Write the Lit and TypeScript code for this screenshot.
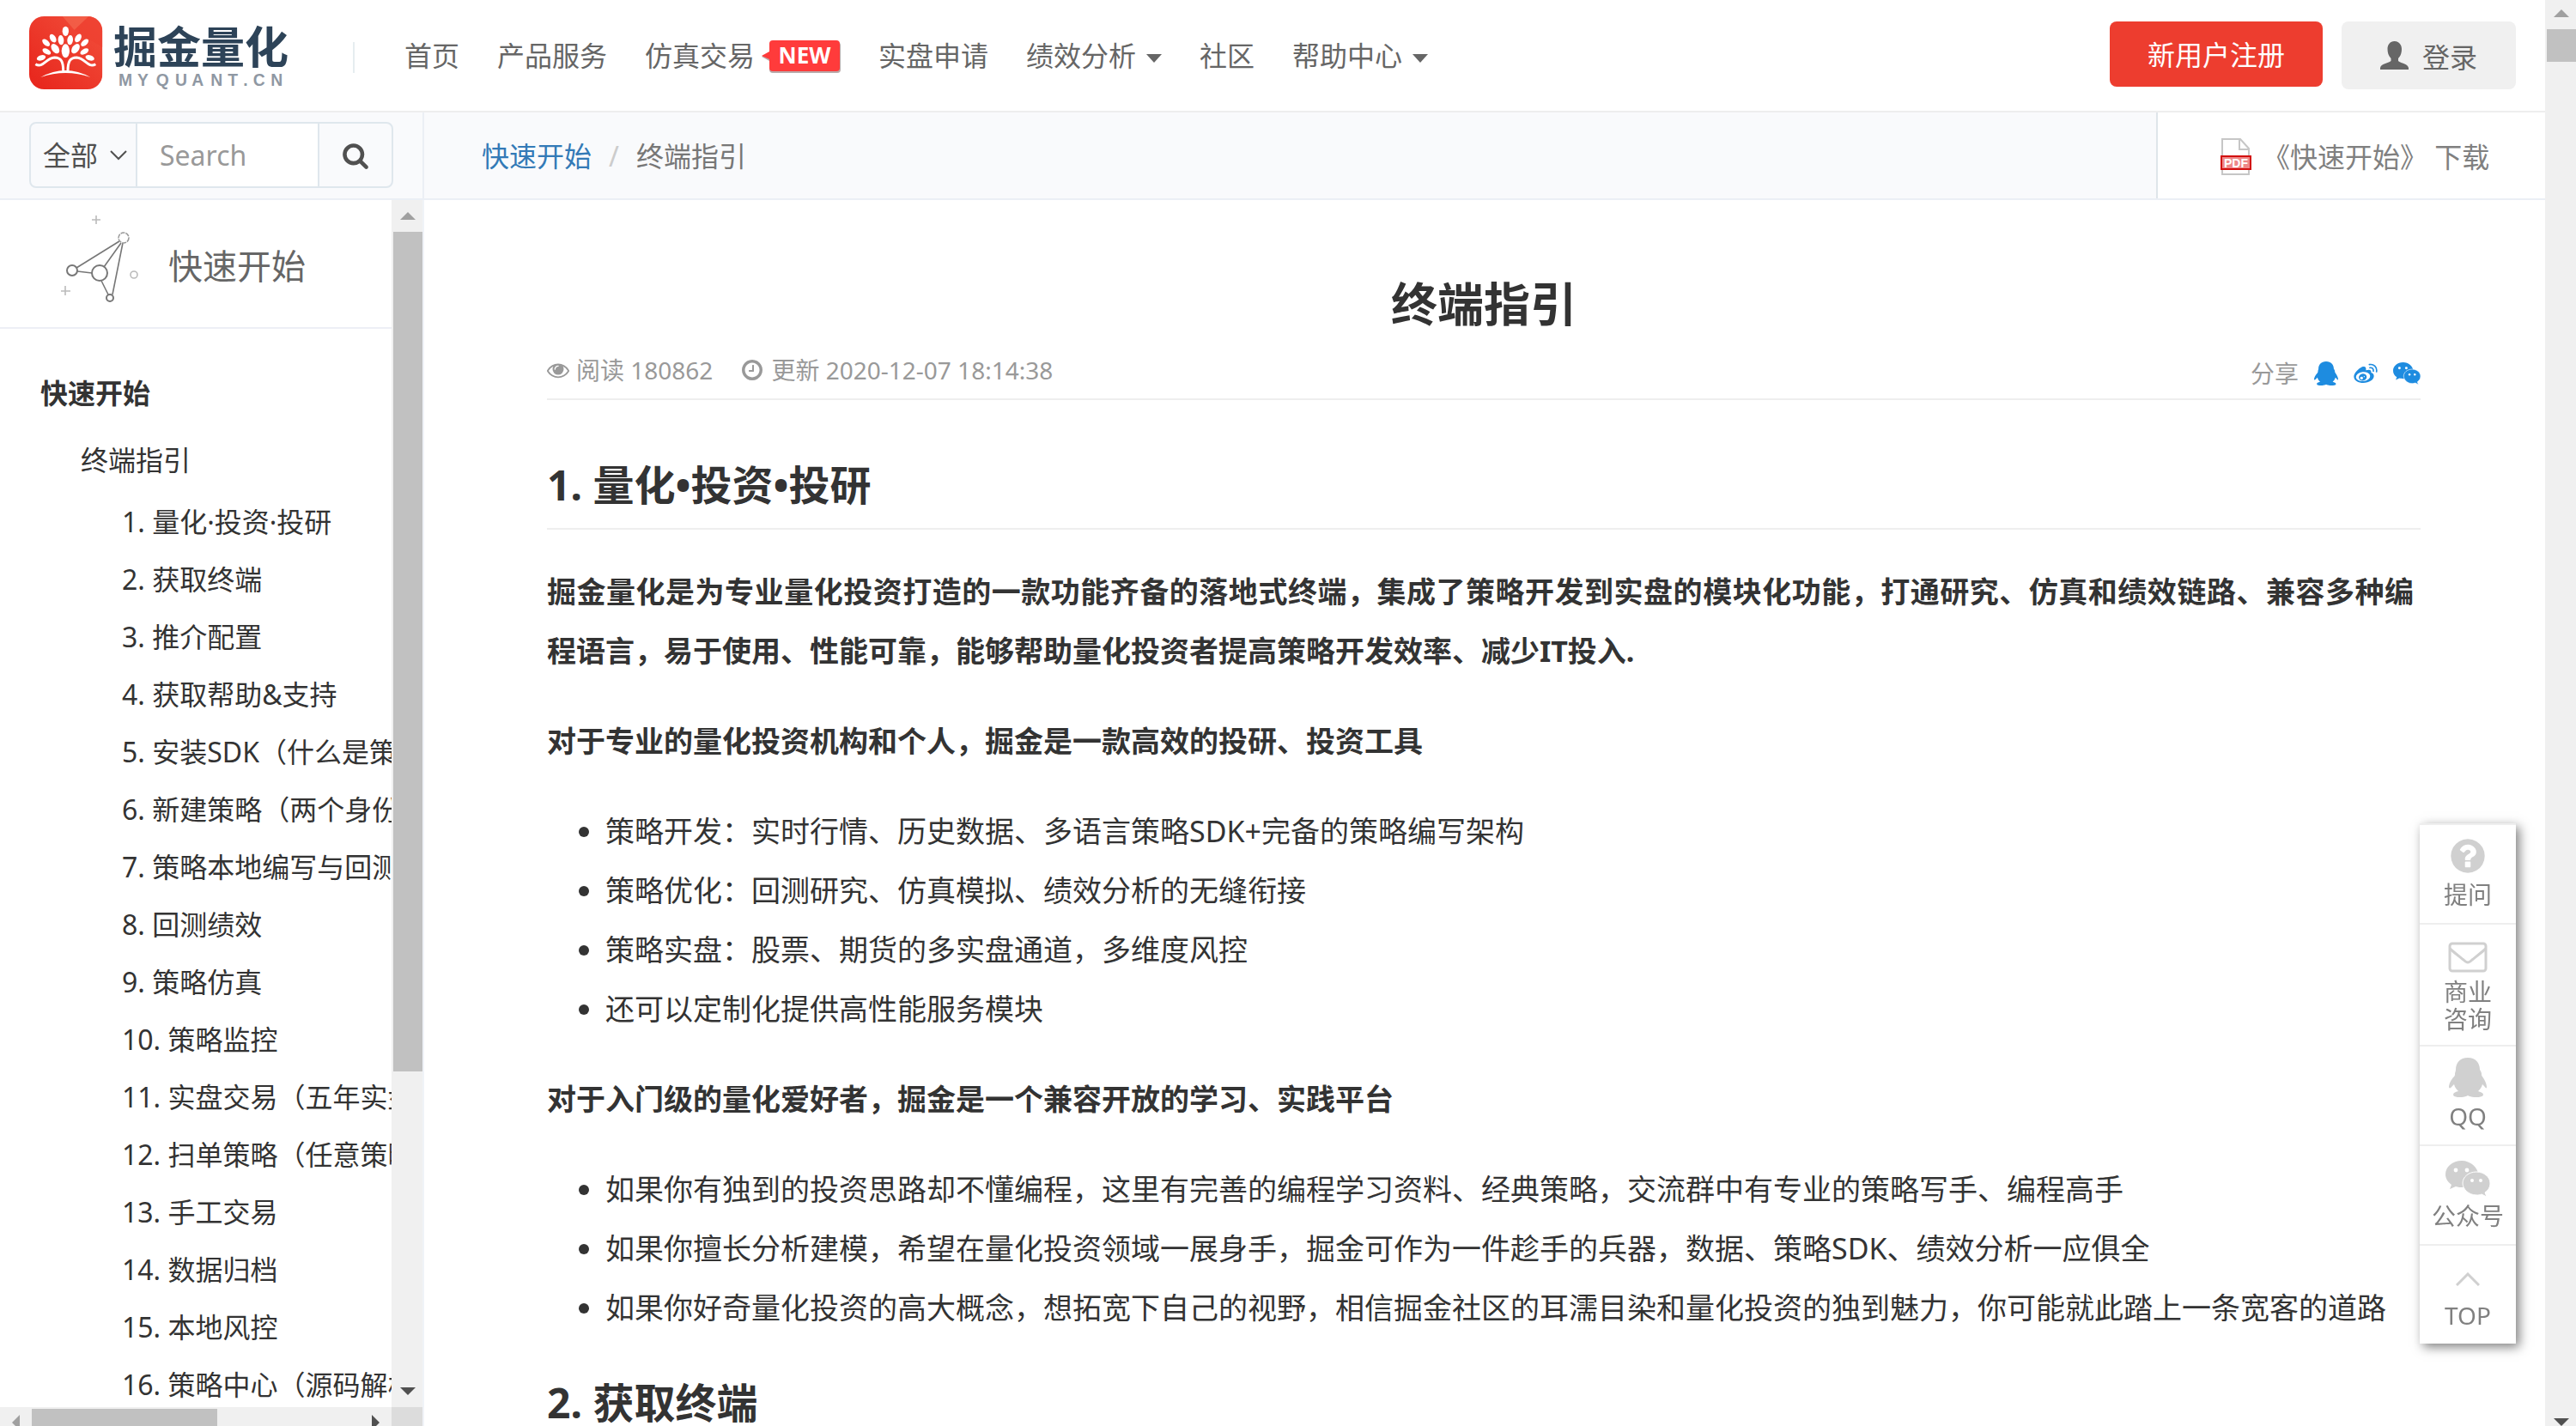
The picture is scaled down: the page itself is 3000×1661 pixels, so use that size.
import { LitElement, html, svg, css } from "lit";
import { customElement } from "lit/decorators.js";

const EYE =
  "M1664 960q-152-236-381-353 61 104 61 225 0 185-131.5 316.5t-316.5 131.5-316.5-131.5-131.5-316.5q0-121 61-225-229 117-381 353 133 205 333.5 326.5t434.5 121.5 434.5-121.5 333.5-326.5zm-720-384q0-20-14-34t-34-14q-125 0-214.5 89.5t-89.5 214.5q0 20 14 34t34 14 34-14 14-34q0-86 61-147t147-61q20 0 34-14t14-34zm848 384q0 34-20 69-140 230-376.5 368.5t-499.5 138.5-499.5-139-376.5-368q-20-35-20-69t20-69q140-229 376.5-368t499.5-139 499.5 139 376.5 368q20 35 20 69z";
const CLOCK =
  "M1024 544v448q0 14-9 23t-23 9h-320q-14 0-23-9t-9-23v-64q0-14 9-23t23-9h224v-352q0-14 9-23t23-9h64q14 0 23 9t9 23zm416 352q0-148-73-273t-198-198-273-73-273 73-198 198-73 273 73 273 198 198 273 73 273-73 198-198 73-273zm224 0q0 209-103 385.5t-279.5 279.5-385.5 103-385.5-103-279.5-279.5-103-385.5 103-385.5 279.5-279.5 385.5-103 385.5 103 279.5 279.5 103 385.5z";
const SEARCH =
  "M1216 832q0-185-131.5-316.5t-316.5-131.5-316.5 131.5-131.5 316.5 131.5 316.5 316.5 131.5 316.5-131.5 131.5-316.5zm512 832q0 52-38 90t-90 38q-54 0-90-38l-343-342q-179 124-399 124-143 0-273.5-55.5t-225-150-150-225-55.5-273.5 55.5-273.5 150-225 225-150 273.5-55.5 273.5 55.5 225 150 150 225 55.5 273.5q0 220-124 399l343 343q37 37 37 90z";
const QUESTION =
  "M1024 1376v-192q0-14-9-23t-23-9h-192q-14 0-23 9t-9 23v192q0 14 9 23t23 9h192q14 0 23-9t9-23zm256-672q0-88-55.5-163t-138.5-116-170-41q-243 0-371 213-15 24 8 42l132 100q7 6 19 6 16 0 25-12 53-68 86-92 34-24 86-24 48 0 85.5 26t37.5 59q0 38-20 61t-68 45q-63 28-115.5 86.5t-52.5 125.5v36q0 14 9 23t23 9h192q14 0 23-9t9-23q0-19 21.5-49.5t54.5-49.5q32-18 49-28.5t46-35 44.5-48 28-60.5 12.5-81zm384 192q0 209-103 385.5t-279.5 279.5-385.5 103-385.5-103-279.5-279.5-103-385.5 103-385.5 279.5-279.5 385.5-103 385.5 103 279.5 279.5 103 385.5z";

const fa = (d: string, size: number) => html`
  <svg width=${size} height=${size} viewBox="0 0 1792 1792" fill="currentColor" aria-hidden="true"><path d=${d} /></svg>
`;

const qq = (w: number, h: number) => html`
  <svg width=${w} height=${h} viewBox="0 0 44 46" fill="currentColor" preserveAspectRatio="none" aria-hidden="true">
    <path d="M22 0C13 0 8 6 8 14c0 2-1 3-1 5 0 1 0 2-1 3-4 4-6 9-6 12 0 2 2 2 4-1l2-2c1 4 3 6 5 8-4 1-6 2-6 4 0 4 12 4 17 1 5 3 18 3 18-1 0-2-3-3-6-4 2-2 4-4 5-8l2 2c2 3 3 3 3 1 0-3-2-8-5-12-1-1-1-2-1-3 0-2-1-3-2-5C36 6 31 0 22 0z" />
  </svg>
`;

const wechat = (w: number, h: number) => html`
  <svg width=${w} height=${h} viewBox="0 0 52 42" aria-hidden="true">
    <path fill="currentColor" d="M19 0C8 0 0 7 0 16c0 5 3 9 7 12l-2 5 7-3c3 1 5 1 8 1 10 0 18-7 18-15S29 0 19 0z" />
    <path fill="currentColor" stroke="#fff" stroke-width="1" d="M36 13c-9 0-16 6-16 13s7 14 16 14c2 0 4 0 6-1l6 3-2-5c4-3 6-6 6-11 0-7-7-13-16-13z" />
    <g fill="#fff"><circle cx="12" cy="11" r="2.4" /><circle cx="25" cy="11" r="2.4" /><circle cx="31" cy="23" r="2" /><circle cx="41" cy="23" r="2" /></g>
  </svg>
`;

const weibo = html`
  <svg width="28" height="24" viewBox="0 0 84 70" aria-hidden="true">
    <path fill="currentColor" d="M30 12C17 18 1 34 1 46c0 13 15 22 33 22 20 0 37-11 37-24 0-7-5-10-10-12 3-8-4-13-18-8 2-9-2-16-13-12z" />
    <ellipse cx="33" cy="46" rx="25" ry="16" fill="#fff" transform="rotate(-6 33 46)" />
    <ellipse cx="32" cy="48" rx="14" ry="12" fill="currentColor" transform="rotate(-15 32 48)" />
    <circle cx="28" cy="51" r="5" fill="#fff" /><circle cx="37" cy="46" r="2" fill="#fff" />
    <g fill="none" stroke="currentColor" stroke-width="5" stroke-linecap="round">
      <path d="M55 4c15-3 28 8 25 25" /><path d="M57 15c8-1 13 4 12 12" />
    </g>
  </svg>
`;

/* [cx, cy, rx, ry, rotation] of every leaf of the logo's tree */
const LEAVES = [
  [229, 109, 11, 17, 0],
  [185, 134, 10, 16, -30],
  [213, 140, 10, 17, -6],
  [245, 140, 10, 17, 6],
  [273, 133, 10, 16, 30],
  [161, 149, 9, 16, -48],
  [296, 149, 9, 16, 48],
  [163, 180, 9, 16, -60],
  [193, 170, 12, 19, -35],
  [229, 178, 14, 24, 0],
  [264, 170, 12, 19, 35],
  [295, 180, 9, 16, 60],
  [144, 202, 9, 16, 72],
  [314, 202, 9, 16, -72],
];

const logo = html`
  <svg class="logo" width="308" height="85" viewBox="102 57 924 255" role="img" aria-label="掘金量化 MYQUANT.CN">
    <defs>
      <linearGradient id="red" x1="0" y1="1" x2="1" y2="0">
        <stop offset="0" stop-color="#e7241b" /><stop offset="1" stop-color="#f2503c" />
      </linearGradient>
      <clipPath id="tile"><rect x="102" y="57" width="256" height="255" rx="52" /></clipPath>
    </defs>
    <g clip-path="url(#tile)">
      <rect x="102" y="57" width="256" height="255" fill="url(#red)" />
      <path d="M218 57l42 48 50-48z" fill="#f4664f" opacity=".7" />
      <path d="M260 105l98 60V57h-48z" fill="#ee4030" opacity=".7" />
    </g>
    <g fill="#fff">
      ${LEAVES.map(([x, y, rx, ry, r]) => svg`<ellipse cx=${x} cy=${y} rx=${rx} ry=${ry} transform="rotate(${r} ${x} ${y})" />`)}
      <path d="M142 270Q229 222 316 270Q229 240 142 270z" />
    </g>
    <g fill="none" stroke="#fff" stroke-width="9">
      <path d="M124 224C150 240 160 203 190 201C214 201 221 216 221 248" />
      <path d="M334 224C308 240 298 203 268 201C244 201 237 216 237 248" />
    </g>
    <text class="brand" x="396" y="221">掘金量化</text>
    <text class="domain" x="414 480 545 612 670 736 796 850 884 946" y="299">MYQUANT.CN</text>
  </svg>
`;

const TOC = [
  "1. 量化·投资·投研",
  "2. 获取终端",
  "3. 推介配置",
  "4. 获取帮助&支持",
  "5. 安装SDK（什么是策",
  "6. 新建策略（两个身份",
  "7. 策略本地编写与回测",
  "8. 回测绩效",
  "9. 策略仿真",
  "10. 策略监控",
  "11. 实盘交易（五年实盘",
  "12. 扫单策略（任意策略",
  "13. 手工交易",
  "14. 数据归档",
  "15. 本地风控",
  "16. 策略中心（源码解析",
];

const caret = html`<svg class="caret" width="18" height="10" viewBox="0 0 18 10" aria-hidden="true"><path d="M0 0h18l-9 10z" fill="currentColor" /></svg>`;
const arrow = (d: string, color: string, w = 18, h = 9) =>
  html`<svg width=${w} height=${h} viewBox="0 0 ${w} ${h}"><path d=${d} fill=${color} /></svg>`;

@customElement("app-root")
export class AppRoot extends LitElement {
  static styles = css`
    * { box-sizing: border-box; }
    :host {
      display: block;
      height: 100vh;
      overflow: hidden;
      background: #fff;
      color: #333;
      font: 32px/44px "Noto Sans", "Noto Sans CJK SC", sans-serif;
    }
    svg { display: block; flex: none; }
    a { color: inherit; text-decoration: none; }
    ul { list-style: none; margin: 0; padding: 0; }
    button, input, select { font: inherit; color: inherit; margin: 0; border: 0; background: none; }
    .app { display: flex; height: 100%; }
    .page { flex: 1; min-width: 0; display: flex; flex-direction: column; }

    .header { display: flex; height: 131px; padding: 0 34px; border-bottom: 2px solid #eee; color: #666; }
    .logo { margin-top: 19px; overflow: visible; }
    .brand { font: 700 153px "Noto Sans CJK SC", sans-serif; fill: #2d4358; }
    .domain { font: 700 58px "Liberation Sans", sans-serif; fill: #8f98a3; }
    .divider { width: 2px; height: 36px; margin: 49px 0 0 69px; background: #e6edf0; }
    .menu { display: flex; align-items: center; gap: 44px; height: 129px; margin-left: 58px; }
    .menu a { display: flex; align-items: center; }
    .caret { margin-left: 12px; margin-top: 6px; }
    .new { margin-left: 8px; margin-top: 4px; }
    .new text { font: 700 26px "Open Sans", sans-serif; fill: #fff; }
    .account { display: flex; align-items: flex-start; gap: 22px; margin-left: auto; padding-top: 25px; }
    .register { width: 248px; height: 76px; padding: 2px 0 0; border-radius: 8px; background: #ed3d2f; color: #fff; }
    .login { display: flex; align-items: center; justify-content: center; gap: 16px; width: 203px; height: 79px; padding: 0; border-radius: 8px; background: #f0f0f0; }
    .login span { padding-top: 4px; }

    .subbar { display: flex; height: 102px; background: #f9fafc; border-bottom: 2px solid #ebeff5; }
    .finder { width: 494px; padding: 11px 34px; border-right: 2px solid #ebeff5; }
    .search { display: flex; height: 77px; border: 2px solid #dfe7ed; border-radius: 8px; overflow: hidden; color: #505050; }
    .scope { display: flex; align-items: center; width: 124px; border-right: 2px solid #dfe7ed; }
    .scope select { appearance: none; width: 92px; height: 73px; padding: 0 0 0 14px; outline: 0; }
    .query { width: 210px; padding: 0 26px; background: #fff; outline: 0; }
    .query::placeholder { color: #999; opacity: 1; }
    .go { flex: 1; display: flex; align-items: center; justify-content: center; padding: 0; border-left: 2px solid #dfe7ed; }
    .crumbs { flex: 1; display: flex; align-items: center; gap: 20px; padding: 2px 0 0 67px; color: #777; }
    .crumbs a { color: #337ab7; }
    .slash { color: #ccc; }
    .download { display: flex; align-items: center; gap: 12px; width: 453px; padding: 4px 0 0 72px; background: #fff; border-left: 2px solid #dfe5ea; color: #808080; }

    .body { flex: 1; min-height: 0; display: flex; }
    .sidebar { width: 494px; display: flex; flex-direction: column; border-right: 2px solid #f0f3f8; }
    .pane { flex: 1; min-height: 0; display: flex; }
    .toc { flex: 1; min-width: 0; overflow: hidden; white-space: nowrap; line-height: 67px; }
    .book { display: flex; align-items: flex-start; gap: 32px; height: 150px; padding: 15px 0 0 68px; border-bottom: 2px solid #edeff5; font-size: 40px; line-height: 124px; color: #666; }
    .part { display: block; padding: 41px 0 11px 47px; font-weight: 700; }
    .chapter { display: block; padding: 0 0 5px 94px; }
    .sections { padding-left: 142px; }
    .vbar { width: 36px; padding: 0 0 0 2px; display: flex; flex-direction: column; align-items: center; background: #f0f0f0; }
    .vbar svg { margin: 14px 0; }
    .vthumb { width: 100%; height: 978px; background: #c1c1c1; }
    .vbar .down { margin-top: auto; }
    .hbar { display: flex; height: 22px; padding-top: 2px; overflow: hidden; background: #f0f0f0; }
    .hbar svg { margin: 7px 14px; }
    .hthumb { width: 216px; height: 34px; background: #c1c1c1; }
    .hbar .right { margin-left: auto; }
    .corner { width: 36px; height: 22px; margin-top: -2px; background: #dcdcdc; }

    .main { flex: 1; min-width: 0; overflow: hidden; padding: 81px 145px 0 143px; }
    .title { margin: 0; font-size: 54px; line-height: 80px; text-align: center; }
    .meta { display: flex; align-items: center; height: 72px; padding-top: 4px; border-bottom: 2px solid #eee; font-size: 28px; line-height: 40px; color: #999; }
    .meta span { display: flex; align-items: center; gap: 8px; margin-right: 32px; }
    .meta .share { margin: 8px 0 0 auto; gap: 18px; }
    .share a { color: #1e8ce0; }
    .article { font-size: 34px; line-height: 69px; }
    .article h2 { margin: 46px 0 38px; padding-bottom: 20px; border-bottom: 2px solid #eee; font-size: 48px; line-height: 60px; }
    .article .first { margin-top: 69px; }
    .article p { margin: 36px 0; padding-right: 8px; font-weight: 700; text-align: justify; }
    .article ul { list-style: disc; padding-left: 68px; white-space: nowrap; }

    .tools { position: fixed; right: 70px; bottom: 96px; width: 112px; background: #fff; box-shadow: 4px 4px 12px rgba(0, 0, 0, 0.5); font-size: 28px; line-height: 32px; color: #808080; text-align: center; }
    .tools a { display: flex; flex-direction: column; align-items: center; justify-content: flex-end; height: 116px; padding-bottom: 17px; border-top: 2px solid #eee; }
    .tools .tall { height: 142px; padding-bottom: 14px; }
    .tools svg { color: #d0d0d0; margin-bottom: 6px; }
    .tools .chevron { margin-bottom: 18px; }
    .scroll .vthumb { height: 38px; }
    .scroll svg { margin: 11px 0 14px; }
    .scroll .down { margin-bottom: -14px; }
  `;

  render() {
    return html`
      <div class="app">
        <div class="page">
          ${this.header()} ${this.subbar()}
          <div class="body">${this.sidebar()} ${this.article()}</div>
        </div>
        <div class="vbar scroll" aria-hidden="true">
          ${arrow("M9 0l9 9H0z", "#a0a0a0")}
          <div class="vthumb"></div>
          <div class="down">${arrow("M0 0h18l-9 9z", "#505050")}</div>
        </div>
      </div>
      ${this.tools()}
    `;
  }

  header() {
    return html`
      <header class="header">
        <a href="#">${logo}</a>
        <div class="divider"></div>
        <nav class="menu">
          <a href="#">首页</a>
          <a href="#">产品服务</a>
          <a href="#">仿真交易
            <svg class="new" width="92" height="40" viewBox="0 0 92 40">
              <path d="M13 2h75q4 0 4 4v28q0 4-4 4H13q-4 0-4-4V24L0 19l9-5V6q0-4 4-4z" fill="#b9aaaa" />
              <path d="M13 0h74q4 0 4 4v28q0 4-4 4H13q-4 0-4-4V22L0 18l9-5V4q0-4 4-4z" fill="#ff3b3b" />
              <text x="50" y="27" text-anchor="middle">NEW</text>
            </svg>
          </a>
          <a href="#">实盘申请</a>
          <a href="#">绩效分析${caret}</a>
          <a href="#">社区</a>
          <a href="#">帮助中心${caret}</a>
        </nav>
        <div class="account">
          <button class="register">新用户注册</button>
          <button class="login">
            <svg width="33" height="33" viewBox="0 0 33 33" aria-hidden="true">
              <path d="M16.500 0c-5 0-8 4-8 9 0 4 1 8 4 11v3C9 26 1 26 0 31v2h33v-2c-1-5-9-5-12-8v-3c3-3 4-7 4-11 0-5-3.500-9-8.500-9z" fill="currentColor" />
            </svg>
            <span>登录</span>
          </button>
        </div>
      </header>
    `;
  }

  subbar() {
    return html`
      <div class="subbar">
        <div class="finder">
          <form class="search" role="search">
            <div class="scope">
              <select aria-label="全部"><option>全部</option></select>
              <svg width="20" height="12" viewBox="0 0 20 12" fill="none" stroke="currentColor" stroke-width="2" aria-hidden="true"><path d="M1 1l9 9 9-9" /></svg>
            </div>
            <input class="query" type="text" placeholder="Search" aria-label="Search" />
            <button class="go" type="button" aria-label="Search">${fa(SEARCH, 32)}</button>
          </form>
        </div>
        <nav class="crumbs"><a href="#">快速开始</a><span class="slash">/</span><span>终端指引</span></nav>
        <a class="download" href="#">
          <svg width="38" height="44" viewBox="0 0 38 44" aria-hidden="true">
            <path d="M3 1h21l10 11v30H3z" fill="#fff" stroke="#c6c6c6" stroke-width="2" />
            <path d="M23 1v12h11" fill="none" stroke="#c6c6c6" stroke-width="2" />
            <rect x="1" y="20" width="36" height="17" fill="#d2100f" />
            <rect x="3" y="22" width="32" height="13" fill="#e88" />
            <text x="19" y="34" text-anchor="middle" font-family="Liberation Sans, sans-serif" font-weight="700" font-size="14" fill="#fff">PDF</text>
          </svg>
          <span>《快速开始》 下载</span>
        </a>
      </div>
    `;
  }

  sidebar() {
    return html`
      <aside class="sidebar">
        <div class="pane">
          <nav class="toc">
            <div class="book">
              <svg width="96" height="106" viewBox="68 248 96 106" fill="none" stroke="#777" stroke-width="1.600" aria-hidden="true">
                <path d="M89 312l50-31M90 316l17 2M121 311l20-28M143 283l-12 60M118 327l8 16" />
                <g stroke-width="2">
                  <circle cx="84" cy="315" r="6" /><circle cx="116" cy="318" r="9" /><circle cx="128" cy="347" r="4" />
                </g>
                <circle cx="144" cy="277" r="6" stroke="#999" stroke-dasharray="5 1" />
                <circle cx="156" cy="320" r="4" stroke="#bbb" />
                <path d="M112 251v10M107 256h10M76 333v11M71 339h11" stroke="#bbb" />
              </svg>
              <span>快速开始</span>
            </div>
            <a class="part" href="#">快速开始</a>
            <a class="chapter" href="#">终端指引</a>
            <ul class="sections">
              ${TOC.map((t) => html`<li><a href="#">${t}</a></li>`)}
            </ul>
          </nav>
          <div class="vbar" aria-hidden="true">
            ${arrow("M9 0l9 9H0z", "#a0a0a0")}
            <div class="vthumb"></div>
            <div class="down">${arrow("M0 0h18l-9 9z", "#505050")}</div>
          </div>
        </div>
        <div class="hbar" aria-hidden="true">
          ${arrow("M9 0v18L0 9z", "#a0a0a0", 9, 18)}
          <div class="hthumb"></div>
          <div class="right">${arrow("M0 0v18l9-9z", "#505050", 9, 18)}</div>
          <div class="corner"></div>
        </div>
      </aside>
    `;
  }

  article() {
    return html`
      <main class="main">
        <h1 class="title">终端指引</h1>
        <div class="meta">
          <span>${fa(EYE, 26)}阅读 180862</span>
          <span>${fa(CLOCK, 28)}更新 2020-12-07 18:14:38</span>
          <span class="share">分享
            <a href="#" aria-label="QQ">${qq(28, 28)}</a>
            <a href="#" aria-label="微博">${weibo}</a>
            <a href="#" aria-label="微信">${wechat(32, 26)}</a>
          </span>
        </div>
        <div class="article">
          <h2 class="first">1. 量化•投资•投研</h2>
          <p>掘金量化是为专业量化投资打造的一款功能齐备的落地式终端，集成了策略开发到实盘的模块化功能，打通研究、仿真和绩效链路、兼容多种编程语言，易于使用、性能可靠，能够帮助量化投资者提高策略开发效率、减少IT投入.</p>
          <p>对于专业的量化投资机构和个人，掘金是一款高效的投研、投资工具</p>
          <ul>
            <li>策略开发：实时行情、历史数据、多语言策略SDK+完备的策略编写架构</li>
            <li>策略优化：回测研究、仿真模拟、绩效分析的无缝衔接</li>
            <li>策略实盘：股票、期货的多实盘通道，多维度风控</li>
            <li>还可以定制化提供高性能服务模块</li>
          </ul>
          <p>对于入门级的量化爱好者，掘金是一个兼容开放的学习、实践平台</p>
          <ul>
            <li>如果你有独到的投资思路却不懂编程，这里有完善的编程学习资料、经典策略，交流群中有专业的策略写手、编程高手</li>
            <li>如果你擅长分析建模，希望在量化投资领域一展身手，掘金可作为一件趁手的兵器，数据、策略SDK、绩效分析一应俱全</li>
            <li>如果你好奇量化投资的高大概念，想拓宽下自己的视野，相信掘金社区的耳濡目染和量化投资的独到魅力，你可能就此踏上一条宽客的道路</li>
          </ul>
          <h2>2. 获取终端</h2>
        </div>
      </main>
    `;
  }

  tools() {
    return html`
      <nav class="tools">
        <a href="#">${fa(QUESTION, 46)}<span>提问</span></a>
        <a class="tall" href="#">
          <svg width="46" height="36" viewBox="0 0 46 36" fill="none" stroke="currentColor" stroke-width="3" aria-hidden="true">
            <rect x="2" y="2" width="42" height="32" rx="3" /><path d="M2 8c7 6 11 9 16 13 4 4 6 4 10 0C33 17 37 14 44 8" />
          </svg>
          <span>商业<br />咨询</span>
        </a>
        <a href="#">${qq(44, 46)}<span>QQ</span></a>
        <a href="#">${wechat(52, 42)}<span>公众号</span></a>
        <a href="#">
          <svg class="chevron" width="28" height="16" viewBox="0 0 28 16" fill="none" stroke="currentColor" stroke-width="3" aria-hidden="true"><path d="M1 15L14 2l13 13" /></svg>
          <span>TOP</span>
        </a>
      </nav>
    `;
  }
}
